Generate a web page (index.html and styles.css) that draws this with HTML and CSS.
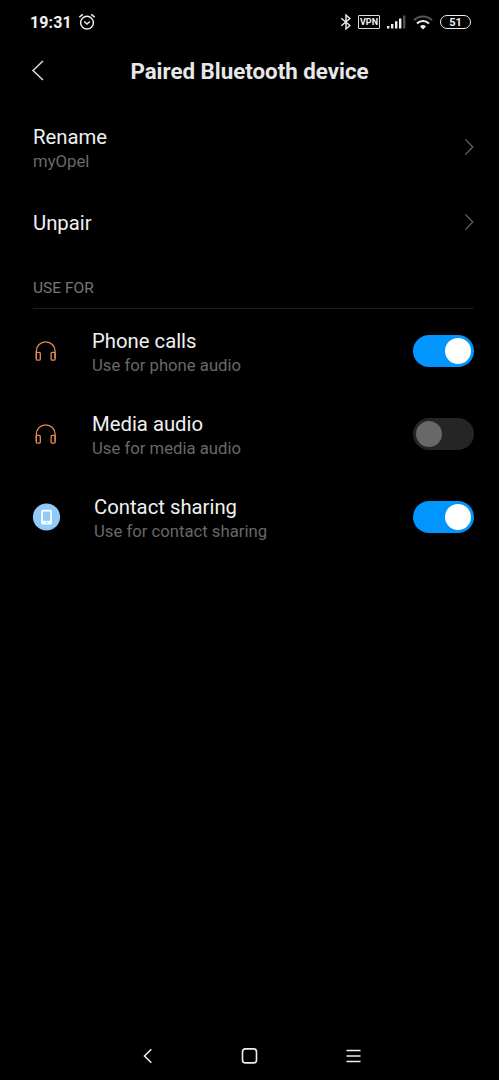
FILE: index.html
```html
<!doctype html>
<html lang="en">
    <head>
        <meta charset="UTF-8" />
        <meta name="viewport" content="width=device-width, initial-scale=1.0" />
        <title>Paired Bluetooth device</title>
        <link rel="stylesheet" href="styles.css">
    </head>
    <body>
        <div class="status-bar">
            <span class="time">19:31</span>
            <svg class="alarm" width="18" height="18" viewBox="0 0 18 18">
                <circle cx="9" cy="9.7" r="6.4" />
                <path d="M1.3 4.2L4.8 1.3M16.7 4.2L13.2 1.3M6.2 8.5L9 11l2.9-2.5" />
            </svg>
            <svg class="bluetooth" width="12" height="16" viewBox="0 0 12 16">
                <path d="M1.3 4.3l8.6 7.2L6 15V1l3.9 3.5-8.6 7.2" />
            </svg>
            <span class="vpn">VPN</span>
            <svg class="signal" width="19" height="14" viewBox="0 0 19 14">
                <path d="M0 11h2.4v2.5H0zM4 9h2.4v4.5H4zM8 6.2h2.4v7.3H8zM12 3.4h2.4v10.1H12z" fill="#eee" />
                <path d="M16 .5h2.4v13H16z" fill="#505050" />
            </svg>
            <svg class="wifi" width="20" height="15" viewBox="0 0 20 15">
                <path d="M1 5.2a13 13 0 0 1 18 0" stroke="#555" />
                <path d="M4 8.5a8.6 8.6 0 0 1 12 0" stroke="#eee" />
                <path d="M7 11.4a4.5 4.5 0 0 1 6 0L10 14.5z" fill="#eee" />
            </svg>
            <span class="battery">51</span>
        </div>

        <header class="header">
            <svg class="back" width="14" height="22" viewBox="0 0 14 22">
                <path d="M12 1L2 10.5l10 9.5" />
            </svg>
            <h1>Paired Bluetooth device</h1>
        </header>

        <main>
            <div class="row rename">
                <div class="text">
                    <div class="title">Rename</div>
                    <div class="summary">myOpel</div>
                </div>
                <svg class="chevron" width="10" height="18" viewBox="0 0 10 18">
                    <path d="M1.3 1.3L8.8 9l-7.5 7.7" />
                </svg>
            </div>
            <div class="row unpair">
                <div class="text">
                    <div class="title">Unpair</div>
                </div>
                <svg class="chevron" width="10" height="18" viewBox="0 0 10 18">
                    <path d="M1.3 1.3L8.8 9l-7.5 7.7" />
                </svg>
            </div>

            <h2>USE FOR</h2>

            <div class="row profile">
                <svg class="icon headphones" width="28" height="28" viewBox="0 0 28 28">
                    <path d="M3.3 21v-6.8a9.4 9.4 0 0 1 18.8 0V21" />
                    <rect x="3.3" y="15.3" width="4" height="7.8" rx="1.2" />
                    <rect x="18.1" y="15.3" width="4" height="7.8" rx="1.2" />
                </svg>
                <div class="text">
                    <div class="title">Phone calls</div>
                    <div class="summary">Use for phone audio</div>
                </div>
                <div class="switch on"></div>
            </div>
            <div class="row profile">
                <svg class="icon headphones" width="28" height="28" viewBox="0 0 28 28">
                    <path d="M3.3 21v-6.8a9.4 9.4 0 0 1 18.8 0V21" />
                    <rect x="3.3" y="15.3" width="4" height="7.8" rx="1.2" />
                    <rect x="18.1" y="15.3" width="4" height="7.8" rx="1.2" />
                </svg>
                <div class="text">
                    <div class="title">Media audio</div>
                    <div class="summary">Use for media audio</div>
                </div>
                <div class="switch"></div>
            </div>
            <div class="row profile contact">
                <svg class="icon" width="28" height="28" viewBox="0 0 28 28">
                    <circle cx="13.5" cy="14" r="13.6" fill="#90caf9" />
                    <rect x="8.2" y="6.7" width="10.8" height="14.8" rx="1.5" fill="#fff" />
                    <path d="M10 8.6h7.2v9.2H10z" fill="#90caf9" />
                    <circle cx="13.6" cy="19.6" r=".8" fill="#90caf9" />
                </svg>
                <div class="text">
                    <div class="title">Contact sharing</div>
                    <div class="summary">Use for contact sharing</div>
                </div>
                <div class="switch on"></div>
            </div>
        </main>

        <nav class="nav-bar">
            <svg width="10" height="16" viewBox="0 0 10 16">
                <path d="M8.3 1.2L1.5 8l6.8 6.8" />
            </svg>
            <svg width="16" height="16" viewBox="0 0 16 16">
                <rect x=".5" y=".9" width="14" height="14" rx="3" />
            </svg>
            <svg width="14" height="16" viewBox="0 0 14 16">
                <path d="M.5 2.5h14M.5 8h14M.5 13.5h14" />
            </svg>
        </nav>
    </body>
</html>
```
FILE: styles.css
```css
* {
    box-sizing: border-box;
}
body {
    display: flex;
    flex-direction: column;
    height: 1080px;
    margin: 0;
    background-color: #000;
    color: #f0f0f0;
    font-family: Roboto, sans-serif;
}
svg {
    display: block;
    flex-shrink: 0;
    fill: none;
    overflow: visible;
}
.status-bar {
    display: flex;
    align-items: center;
    height: 44px;
    padding: 0 28px 0 30px;
}
.time {
    width: 42px;
    font-size: 16px;
    font-weight: 700;
    letter-spacing: 0.1px;
}
.alarm {
    margin-left: 6px;
    stroke: #eee;
    stroke-width: 1.5;
}
.bluetooth {
    margin-left: auto;
    stroke: #eee;
    stroke-width: 1.4;
}
.vpn {
    width: 22px;
    height: 14px;
    margin-left: 6px;
    border: 1.5px solid #ddd;
    border-radius: 1px;
    font-size: 9px;
    font-weight: 700;
    line-height: 12px;
    text-align: center;
}
.signal {
    margin-left: 7px;
}
.wifi {
    margin-left: 7px;
    stroke-width: 2;
}
.battery {
    width: 31px;
    height: 14px;
    margin-left: 7px;
    border: 1.6px solid #eee;
    border-radius: 7px;
    font-size: 11px;
    font-weight: 700;
    line-height: 13px;
    text-align: center;
}
.header {
    display: grid;
    grid-template-columns: 14px 1fr 14px;
    align-items: center;
    height: 53px;
    padding: 0 31px;
}
.back {
    stroke: #ddd;
    stroke-width: 1.5;
}
h1 {
    margin: 0;
    font-size: 22.3px;
    font-weight: 700;
    line-height: 28px;
    text-align: center;
    color: #e8e8e8;
}
main {
    flex: 1;
    padding: 8px 25px 0 33px;
}
.row {
    display: flex;
    align-items: center;
}
.rename {
    height: 84px;
}
.unpair {
    height: 66px;
}
.text {
    flex: 1;
}
.rename .text {
    padding-top: 4px;
}
.unpair .text {
    padding-top: 1px;
}
.profile .text {
    padding-top: 5px;
}
.title {
    font-size: 20.3px;
    line-height: 26px;
}
.summary {
    font-size: 16.7px;
    line-height: 24px;
    color: #686868;
}
.chevron {
    stroke: #666;
    stroke-width: 1.2;
}
h2 {
    height: 54px;
    margin: 0;
    border-bottom: 1px solid #1c1c1c;
    font-size: 15.5px;
    font-weight: 400;
    line-height: 66px;
    color: #777;
}
.profile {
    height: 83px;
}
.icon {
    width: 28px;
    margin-right: 31px;
}
.headphones {
    stroke: #e58a5a;
    stroke-width: 1.3;
}
.contact .icon {
    margin-right: 33px;
}
.switch {
    display: flex;
    align-items: center;
    width: 61px;
    height: 32px;
    padding: 0 3px;
    border-radius: 16px;
    background-color: #252525;
}
.switch::before {
    content: "";
    width: 26px;
    height: 26px;
    border-radius: 50%;
    background-color: #686868;
}
.switch.on {
    justify-content: flex-end;
    background-color: #0095ff;
}
.switch.on::before {
    background-color: #fff;
}
.nav-bar {
    display: flex;
    align-items: center;
    justify-content: space-between;
    height: 48px;
    padding: 0 139px 0 143px;
    stroke: #eee;
    stroke-width: 1.6;
}
```
